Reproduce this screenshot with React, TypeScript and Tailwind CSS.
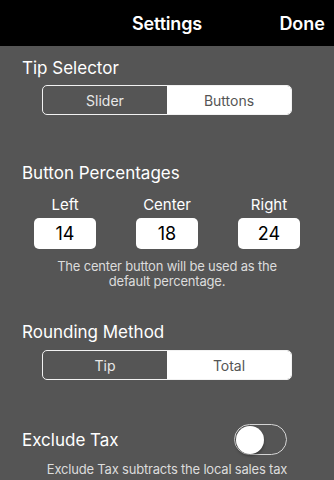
import React from "react";

const font = { fontFamily: "Inter, 'Noto Sans', sans-serif" };

interface SegmentedProps {
  left: string;
  right: string;
}

const Segmented: React.FC<SegmentedProps> = ({ left, right }) => (
  <div className="mx-[42px] flex h-[30px] overflow-hidden rounded-[5px] border border-[#f2f2f2]">
    <div className="flex flex-1 items-center justify-center text-[14px] text-[#e8e8e8]">
      {left}
    </div>
    <div className="flex flex-1 items-center justify-center bg-white text-[14px] text-[#555555]">
      {right}
    </div>
  </div>
);

const SectionTitle: React.FC<{ children: React.ReactNode; className?: string }> = ({
  children,
  className = "",
}) => (
  <h2 className={`px-[22px] text-[17px] leading-[22px] text-white ${className}`}>
    {children}
  </h2>
);

const percentages = [
  { label: "Left", value: "14" },
  { label: "Center", value: "18" },
  { label: "Right", value: "24" },
];

export default function App() {
  return (
    <div
      className="flex h-[480px] w-[334px] flex-col overflow-hidden bg-[#555555]"
      style={font}
    >
      {/* nav bar */}
      <header className="grid h-[46px] shrink-0 grid-cols-[1fr_auto_1fr] items-center bg-black px-[9px]">
        <div />
        <h1 className="text-[18px] font-semibold tracking-[-0.2px] text-white">Settings</h1>
        <button type="button" className="justify-self-end text-[18px] font-semibold text-white">
          Done
        </button>
      </header>

      <SectionTitle className="mt-[11px]">Tip Selector</SectionTitle>
      <div className="mt-[6px]">
        <Segmented left="Slider" right="Buttons" />
      </div>

      <SectionTitle className="mt-[47px]">Button Percentages</SectionTitle>
      <div className="mt-[11px] grid grid-cols-3 px-[14px]">
        {percentages.map((p) => (
          <div key={p.label} className="flex flex-col items-center">
            <span className="text-[15px] leading-[20px] text-white">{p.label}</span>
            <div className="mt-[3px] flex h-[31px] w-[62px] items-center justify-center rounded-[5px] bg-white text-[18px] text-black">
              {p.value}
            </div>
          </div>
        ))}
      </div>
      <p className="mt-[10px] px-[30px] text-center text-[13px] leading-[15px] tracking-[-0.2px] text-[#dcdcdc]">
        The center button will be used as the
        <br />
        default percentage.
      </p>

      <SectionTitle className="mt-[32px]">Rounding Method</SectionTitle>
      <div className="mt-[7px]">
        <Segmented left="Tip" right="Total" />
      </div>

      <div className="mt-[44px] flex items-center justify-between pl-[22px] pr-[47px]">
        <h2 className="text-[17px] leading-[22px] text-white">Exclude Tax</h2>
        <div className="flex h-[31px] w-[53px] items-center rounded-full border-[1.5px] border-[#d4d4d4] px-[1px]">
          <div className="h-[28px] w-[28px] rounded-full bg-white shadow-[0_2px_3px_rgba(0,0,0,0.35)]" />
        </div>
      </div>
      <p className="mt-[6px] px-[20px] text-center text-[13px] leading-[17px] tracking-[-0.2px] text-[#dcdcdc]">
        Exclude Tax subtracts the local sales tax
        <br />
        from the bill before calculating the tip.
      </p>
    </div>
  );
}
